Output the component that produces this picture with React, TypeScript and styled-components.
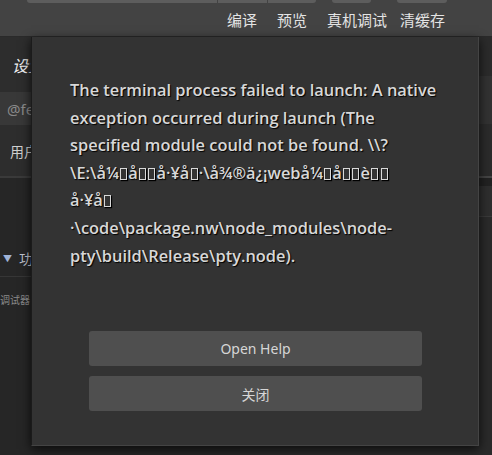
import React from "react";
import styled, { createGlobalStyle } from "styled-components";

const GlobalStyle = createGlobalStyle`
  html, body { margin: 0; padding: 0; background: #262626; overflow: hidden; }
  body { width: 492px; height: 455px; font-family: "Noto Sans", "Noto Sans CJK SC", sans-serif; }
`;

const Page = styled.div`
  position: relative;
  width: 492px;
  height: 455px;
  display: flex;
  flex-direction: column;
  background: #262626;
  overflow: hidden;
`;

const TopBar = styled.div`
  height: 36px;
  flex: none;
  background: #434343;
  border-bottom: 1px solid #2a2a2a;
  display: flex;
  flex-direction: column;
`;

const TabStrip = styled.div`
  display: flex;
  height: 3px;
  padding-left: 27px;
  gap: 16px;
`;

const TabGroup = styled.div<{ $ml?: number }>`
  display: flex;
  gap: 1px;
  margin-left: ${(p) => p.$ml ?? 0}px;
`;

const TabStub = styled.div<{ $w: number; $first?: boolean; $last?: boolean }>`
  width: ${(p) => p.$w}px;
  height: 3px;
  background: #5d5d5d;
  border-bottom-left-radius: ${(p) => (p.$first ? 3 : 0)}px;
  border-bottom-right-radius: ${(p) => (p.$last ? 3 : 0)}px;
`;

const Menu = styled.div`
  display: flex;
  justify-content: flex-end;
  padding-right: 47px;
  margin-top: 7px;
  height: 20px;
  align-items: center;
`;

const MenuItem = styled.span<{ $ml: number }>`
  margin-left: ${(p) => p.$ml}px;
  font-family: "Noto Sans CJK SC", sans-serif;
  font-size: 15px;
  line-height: 20px;
  color: #e4e4e4;
`;

const Workspace = styled.div`
  flex: 1;
  display: flex;
`;

const Sidebar = styled.div`
  width: 240px;
  display: flex;
  flex-direction: column;
  background: #262626;
`;

const SideBlock = styled.div<{ $h: number; $bg: string }>`
  height: ${(p) => p.$h}px;
  background: ${(p) => p.$bg};
  display: flex;
  align-items: center;
  overflow: hidden;
  white-space: nowrap;
`;

const SideText = styled.span<{ $color: string; $pl: number; $italic?: boolean; $size?: number }>`
  padding-left: ${(p) => p.$pl}px;
  color: ${(p) => p.$color};
  font-size: ${(p) => p.$size ?? 14}px;
  font-style: ${(p) => (p.$italic ? "italic" : "normal")};
  font-family: "Noto Sans", "Noto Sans CJK SC", sans-serif;
`;

const Divider = styled.div<{ $c: string; $h?: number }>`
  height: ${(p) => p.$h ?? 1}px;
  background: ${(p) => p.$c};
`;

const Caret = styled.span`
  color: #9fb3d6;
  font-size: 9px;
  padding-left: 3px;
`;

const MainArea = styled.div`
  flex: 1;
  display: flex;
  flex-direction: column;
  background: #2a2a2a;
`;

const MainRow = styled.div<{ $h: number; $bg: string }>`
  height: ${(p) => p.$h}px;
  background: ${(p) => p.$bg};
`;

const Modal = styled.div`
  position: absolute;
  left: 31px;
  top: 37px;
  width: 448px;
  height: 409px;
  box-sizing: border-box;
  background: #333333;
  border-left: 1px solid #1b1b1b;
  border-right: 1px solid #444;
  border-bottom: 1px solid #444;
  box-shadow: 0 3px 10px rgba(0, 0, 0, 0.75);
  display: flex;
  flex-direction: column;
  padding: 39px 0 34px 38px;
`;

const Message = styled.div`
  flex: 1;
  font-family: "Open Sans", "Noto Sans", sans-serif;
  font-weight: 600;
  font-size: 16.4px;
  line-height: 27.6px;
  color: #d8d8d8;
  text-shadow: 1px 1px 1px #000;
  white-space: nowrap;
`;

const Tofu = styled.span`
  display: inline-block;
  width: 7px;
  height: 12px;
  box-sizing: border-box;
  border: 1px solid #d8d8d8;
  margin: 0 1.2px;
  vertical-align: -1px;
  box-shadow: 1px 1px 1px #000;
`;

const Actions = styled.div`
  display: flex;
  flex-direction: column;
  gap: 10px;
  padding-left: 19px;
`;

const Button = styled.button`
  width: 333px;
  height: 35px;
  border: none;
  border-radius: 3px;
  background: #4f4f4f;
  color: #d6d6d6;
  font-family: "Noto Sans", "Noto Sans CJK SC", sans-serif;
  font-size: 14px;
  padding: 0;
  cursor: pointer;
`;

const T = () => <Tofu />;

export default function App() {
  return (
    <>
      <GlobalStyle />
      <Page>
        <TopBar>
          <TabStrip>
            <TabGroup>
              <TabStub $w={190} $first />
              <TabStub $w={49} />
              <TabStub $w={48} $last />
            </TabGroup>
            <TabGroup>
              <TabStub $w={39} $first $last />
            </TabGroup>
            <TabGroup $ml={10}>
              <TabStub $w={50} $first $last />
            </TabGroup>
          </TabStrip>
          <Menu>
            <MenuItem $ml={0}>编译</MenuItem>
            <MenuItem $ml={20}>预览</MenuItem>
            <MenuItem $ml={20}>真机调试</MenuItem>
            <MenuItem $ml={13}>清缓存</MenuItem>
          </Menu>
        </TopBar>
        <Workspace>
          <Sidebar>
            <SideBlock $h={55} $bg="#2d2d2d">
              <SideText $color="#f2f2f2" $pl={12} $italic $size={16}>设置</SideText>
            </SideBlock>
            <SideBlock $h={33} $bg="#383838">
              <SideText $color="#8a8a8a" $pl={7} $size={15}>@fe</SideText>
            </SideBlock>
            <SideBlock $h={51} $bg="#2d2d2d">
              <SideText $color="#cfcfcf" $pl={10}>用户</SideText>
            </SideBlock>
            <Divider $c="#3a3a3a" $h={2} />
            <SideBlock $h={62} $bg="#262626" />
            <SideBlock $h={36} $bg="#262626">
              <Caret>▼</Caret>
              <SideText $color="#c0c4d0" $pl={7}>功能</SideText>
            </SideBlock>
            <Divider $c="#363636" />
            <SideBlock $h={44} $bg="#262626">
              <SideText $color="#8a8a8a" $pl={0} $size={10}>调试器</SideText>
            </SideBlock>
          </Sidebar>
          <MainArea>
            <MainRow $h={39} $bg="#2b2b2b" />
            <MainRow $h={48} $bg="#323232" />
            <MainRow $h={52} $bg="#2b2b2b" />
            <MainRow $h={2} $bg="#444444" />
            <MainRow $h={8} $bg="#222222" />
            <MainRow $h={30} $bg="#2e2e2e" />
            <MainRow $h={1} $bg="#3a3a3a" />
          </MainArea>
        </Workspace>
        <Modal>
          <Message>
            The terminal process failed to launch: A native
            <br />
            exception occurred during launch (The
            <br />
            specified module could not be found. \\?
            <br />
            \E:\å¼<T />å<T /><T />å·¥å<T />·\å¾®ä¿¡webå¼<T />å<T /><T />è<T /><T />
            <br />
            å·¥å<T />
            <br />
            ·\code\package.nw\node_modules\node-
            <br />
            pty\build\Release\pty.node).
          </Message>
          <Actions>
            <Button>Open Help</Button>
            <Button>关闭</Button>
          </Actions>
        </Modal>
      </Page>
    </>
  );
}
